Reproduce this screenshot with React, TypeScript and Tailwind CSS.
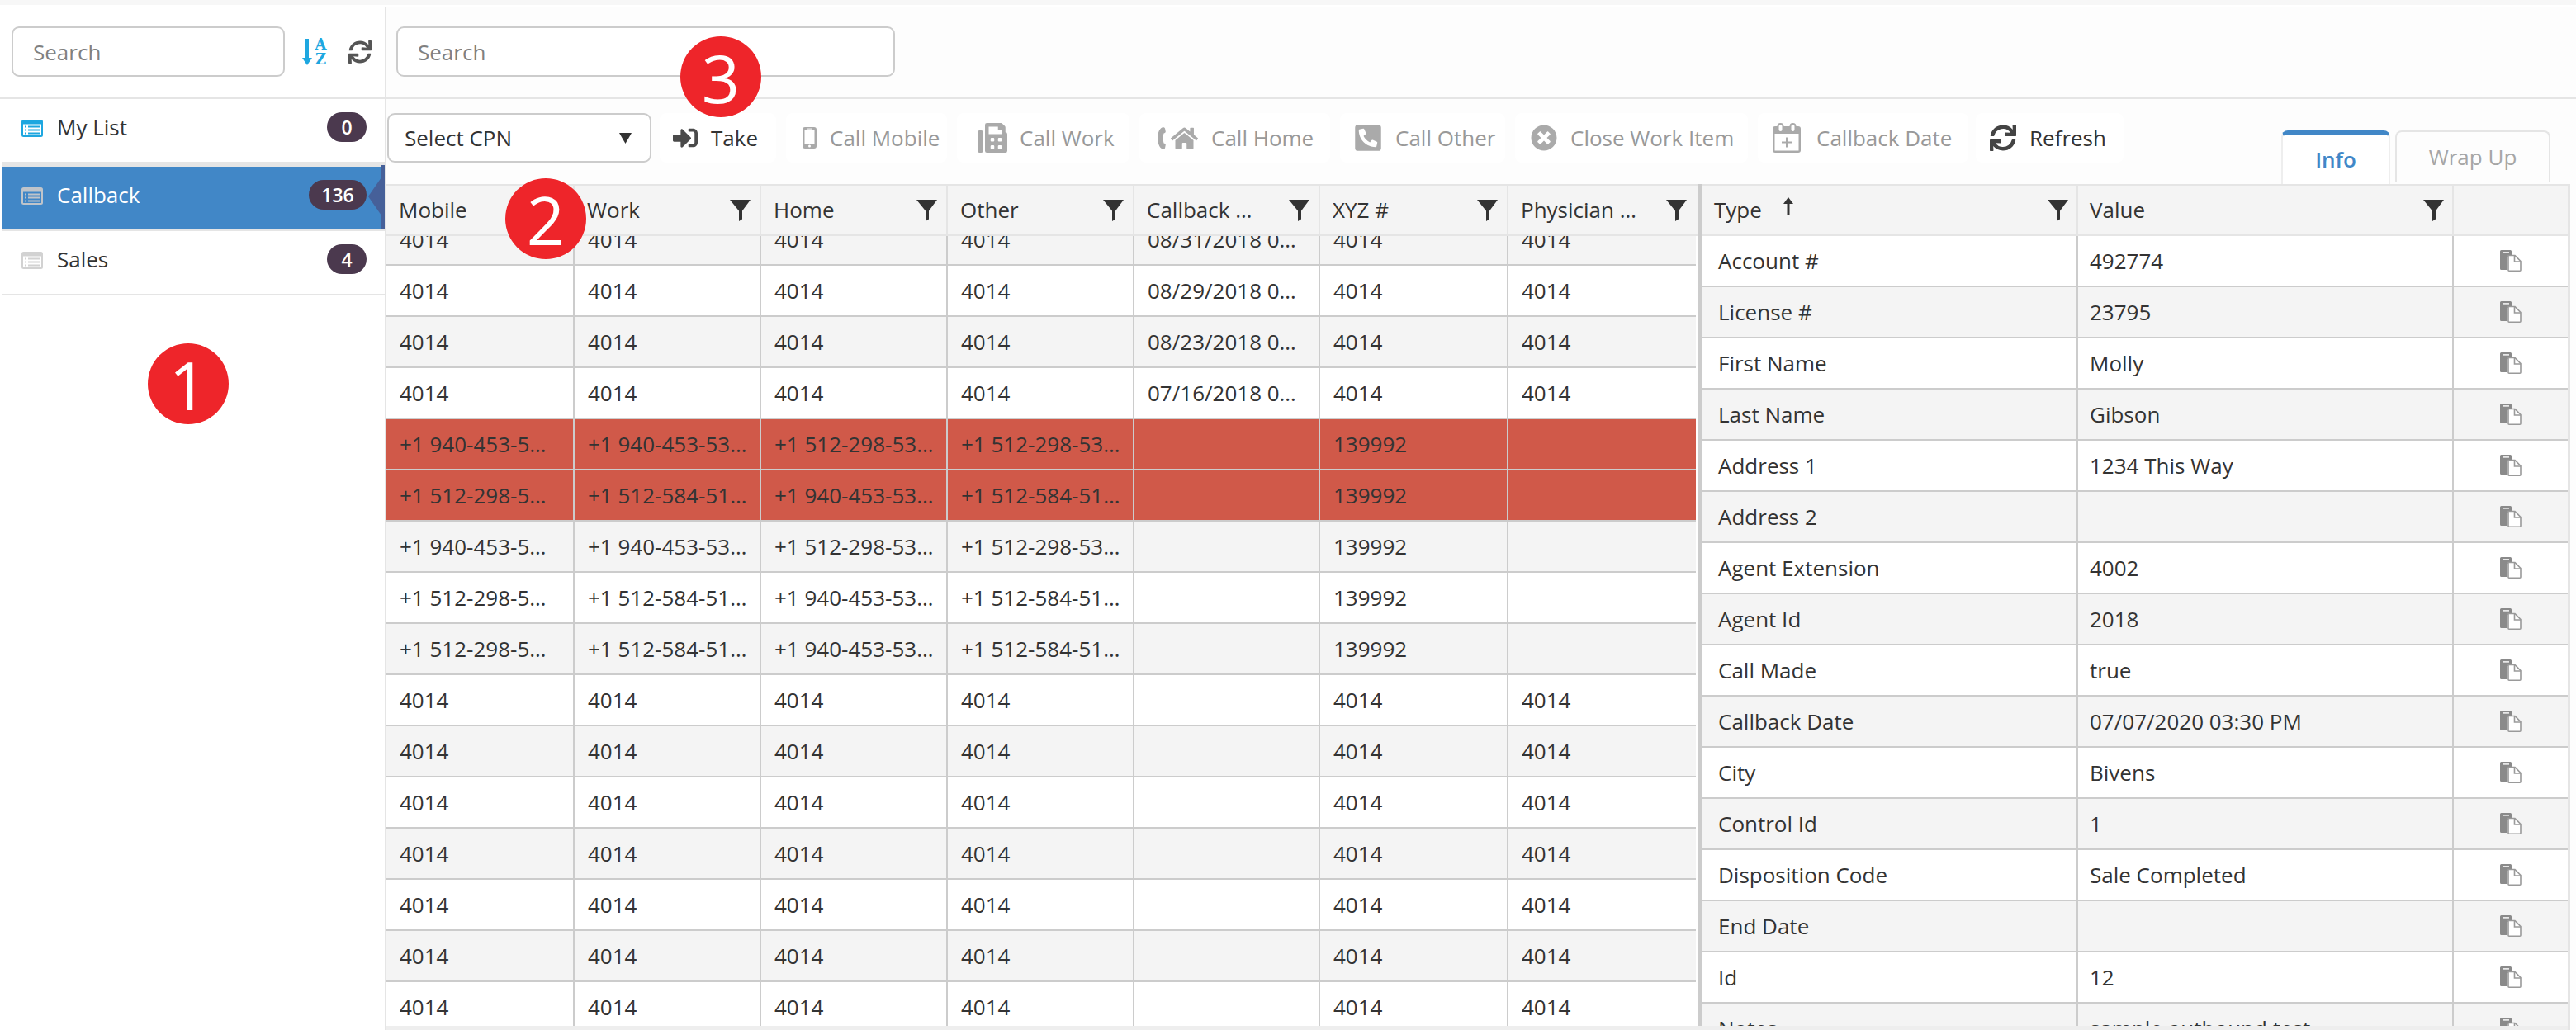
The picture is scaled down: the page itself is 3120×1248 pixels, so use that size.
import React from "react";
import { FaSignInAlt, FaFax, FaHome, FaPhoneSquareAlt, FaTimesCircle, FaSync } from "react-icons/fa";

function ListIcon({ frame, panel }: { frame: string; panel: string }) {
  return (
    <svg width="26" height="21" viewBox="0 0 26 21" className="shrink-0 mt-[3px]">
      <rect width="26" height="21" rx="2.5" fill={frame} />
      <rect x="2" y="5.5" width="22" height="13.5" fill={panel} />
      {[7.5, 11.5, 15.5].map((y) => (
        <g key={y} fill={frame}>
          <rect x="4" y={y} width="2" height="2" />
          <rect x="8" y={y} width="14" height="2" />
        </g>
      ))}
    </svg>
  );
}

function Funnel() {
  return (
    <svg width="25" height="26" viewBox="0 0 25 26" className="shrink-0">
      <path d="M0 0H25L15 13.5V23.5L11 26V13.5Z" fill="#333333" />
    </svg>
  );
}

function CopyIcon() {
  return (
    <svg width="26" height="26" viewBox="0 0 26 26">
      <path d="M1.5 0H12.5A1.5 1.5 0 0 1 14 1.5V8H9V24H1.5A1.5 1.5 0 0 1 0 22.500V1.500A1.500 1.500 0 0 1 1.500 0Z" fill="#8a8a8a" />
      <rect x="3" y="2.200" width="8" height="1.400" fill="#ffffff" />
      <path d="M10 6.500H18L25 13.500V24.200A1 1 0 0 1 24 25.200H11A1 1 0 0 1 10 24.200Z" fill="#ffffff" stroke="#9a9a9a" strokeWidth="1.600" />
      <path d="M17.500 6.500V14H25" fill="none" stroke="#9a9a9a" strokeWidth="1.600" />
    </svg>
  );
}

function MobileIcon() {
  return (
    <svg width="17" height="26" viewBox="0 0 17 26" className="shrink-0">
      <rect width="17" height="26" rx="3" fill="#aaaaaa" />
      <rect x="2.500" y="4" width="12" height="16.500" fill="#ffffff" />
      <circle cx="8.500" cy="23" r="1.500" fill="#ffffff" />
      <rect x="6" y="1.600" width="5" height="1" fill="#ffffff" />
    </svg>
  );
}

function HomePhoneIcon() {
  return (
    <span className="flex items-center gap-[6px] shrink-0">
      <svg width="10" height="27" viewBox="0 0 10 27">
        <path d="M5.500 0.500C6.800 0 8.500 0.300 9 1.500L9.800 5.500C9.800 6.700 8.800 7.200 7.500 7.600C6.600 10.500 6.500 16 7.500 19.500C8.800 19.800 9.800 20.400 9.800 21.500L9 25.500C8.500 26.700 6.800 27 5.500 26.500C-1.500 23 -1.800 4 5.500 0.500Z" fill="#aaaaaa" />
      </svg>
      <FaHome size={33} color="#aaaaaa" />
    </span>
  );
}

function CalendarIcon() {
  return (
    <svg width="34" height="36" viewBox="0 0 34 36" className="shrink-0">
      <rect y="4" width="34" height="32" rx="3" fill="#aaaaaa" />
      <rect x="2.500" y="13" width="29" height="20.500" fill="#ffffff" />
      <rect x="6.500" y="1" width="6" height="10" rx="3" fill="#ffffff" stroke="#aaaaaa" strokeWidth="2" />
      <rect x="21.500" y="1" width="6" height="10" rx="3" fill="#ffffff" stroke="#aaaaaa" strokeWidth="2" />
      <path d="M17 17.500V29.500M11 23.500H23" stroke="#aaaaaa" strokeWidth="2" />
    </svg>
  );
}

function Search({ width }: { width: string }) {
  return (
    <input
      readOnly
      placeholder="Search"
      className={`${width} h-[61px] shrink-0 rounded-[9px] border-2 border-[#cccccc] bg-white pl-[24px] text-[26px] text-[#333333] placeholder:text-[#808080] outline-none`}
    />
  );
}

function Badge({ n, width }: { n: string; width: string }) {
  return (
    <span className={`${width} h-[36px] rounded-full bg-[#4b394e] text-white text-[23px] font-semibold flex items-center justify-center`}>
      {n}
    </span>
  );
}

function Marker({ n, place }: { n: string; place: string }) {
  return (
    <div className={`absolute ${place} w-[98px] h-[98px] rounded-full bg-[#ee252a] text-white text-[81px] font-medium leading-none flex items-center justify-center`}>
      {n}
    </div>
  );
}

const colWidths = ["w-[228px]", "w-[226px]", "w-[226px]", "w-[226px]", "w-[225px]", "w-[228px]", "w-[227px]"];
const headers = ["Mobile", "Work", "Home", "Other", "Callback …", "XYZ #", "Physician …"];

const d4 = "4014";
const phoneA = ["+1 940-453-5…", "+1 940-453-53…", "+1 512-298-53…", "+1 512-298-53…", "", "139992", ""];
const phoneB = ["+1 512-298-5…", "+1 512-584-51…", "+1 940-453-53…", "+1 512-584-51…", "", "139992", ""];
const dated = (date: string) => [d4, d4, d4, d4, date, d4, d4];
const plain = [d4, d4, d4, d4, "", d4, d4];

const rows: string[][] = [
  dated("08/31/2018 0…"),
  dated("08/29/2018 0…"),
  dated("08/23/2018 0…"),
  dated("07/16/2018 0…"),
  phoneA,
  phoneB,
  phoneA,
  phoneB,
  phoneB,
  plain,
  plain,
  plain,
  plain,
  plain,
  plain,
  plain,
];

const info: [string, string][] = [
  ["Account #", "492774"],
  ["License #", "23795"],
  ["First Name", "Molly"],
  ["Last Name", "Gibson"],
  ["Address 1", "1234 This Way"],
  ["Address 2", ""],
  ["Agent Extension", "4002"],
  ["Agent Id", "2018"],
  ["Call Made", "true"],
  ["Callback Date", "07/07/2020 03:30 PM"],
  ["City", "Bivens"],
  ["Control Id", "1"],
  ["Disposition Code", "Sale Completed"],
  ["End Date", ""],
  ["Id", "12"],
  ["Notes", "sample outbound test"],
];

function ToolButton({
  box,
  gap,
  icon,
  label,
  dark,
}: {
  box: string;
  gap: string;
  icon: React.ReactNode;
  label: string;
  dark?: boolean;
}) {
  return (
    <div className={`${box} ${gap} h-[60px] shrink-0 rounded-[8px] bg-white flex items-center whitespace-nowrap ${dark ? "text-[#333333]" : "text-[#999999]"}`}>
      {icon}
      <span>{label}</span>
    </div>
  );
}

export default function App() {
  return (
    <div className="relative w-[3120px] h-[1248px] overflow-hidden bg-white font-['Open_Sans',sans-serif] text-[26px] text-[#333333] flex flex-col">
      <div className="h-[6px] shrink-0 bg-[#f7f7f7]" />
      <div className="h-[2px] shrink-0 bg-white" />
      <div className="flex flex-1 min-h-0">
        {/* Sidebar */}
        <aside className="w-[468px] shrink-0 border-r-2 border-[#e5e5e5] pl-[2px] flex flex-col">
          <div className="h-[112px] shrink-0 border-b-2 border-[#e5e5e5] pl-[14px] pt-[24px] flex items-start -ml-[2px]">
            <Search width="w-[331px]" />
            <div className="h-[61px] ml-[21px] flex items-center">
              <svg width="12" height="32" viewBox="0 0 12 32" className="shrink-0">
                <path d="M4 0H8V23H12L6 32L0 23H4Z" fill="#1ea7e0" />
              </svg>
              <span className="ml-[3px] w-[15px] font-['DejaVu_Serif',serif] font-bold text-[18px] leading-[18px] text-[#1ea7e0] text-center">
                A
                <br />Z
              </span>
              <FaSync size={28} color="#555555" className="ml-[26px]" />
            </div>
          </div>
          <div className="h-[76px] shrink-0 bg-white pl-[24px] pr-[22px] pb-[8px] flex items-center gap-[17px]">
            <ListIcon frame="#1ea7e0" panel="#ffffff" />
            <span className="flex-1">My List</span>
            <Badge n="0" width="w-[48px]" />
          </div>
          <div className="h-[6px] shrink-0 bg-[#e5e5e5]" />
          <div className="relative h-[76px] shrink-0 bg-[#4187c7] pl-[24px] pr-[22px] pb-[8px] flex items-center gap-[17px] text-white">
            <ListIcon frame="#bfc4ca" panel="#4187c7" />
            <span className="flex-1">Callback</span>
            <Badge n="136" width="w-[70px]" />
            <div className="absolute right-0 top-[-2px] w-[4px] h-[78px] bg-[#466099]" />
            <svg width="16" height="46" viewBox="0 0 16 46" className="absolute right-[4px] top-[13px]">
              <path d="M16 0V46L0 23Z" fill="#466099" />
            </svg>
          </div>
          <div className="h-[2px] shrink-0 bg-[#e5e5e5]" />
          <div className="h-[76px] shrink-0 bg-white pl-[24px] pr-[22px] pb-[8px] flex items-center gap-[17px]">
            <ListIcon frame="#d2d2d2" panel="#ffffff" />
            <span className="flex-1">Sales</span>
            <Badge n="4" width="w-[48px]" />
          </div>
          <div className="h-[2px] shrink-0 bg-[#e5e5e5]" />
        </aside>

        {/* Main */}
        <main className="flex-1 min-w-0 flex flex-col bg-[#fdfdfd]">
          <div className="h-[112px] shrink-0 border-b-2 border-[#e5e5e5] pl-[12px] pt-[24px]">
            <Search width="w-[604px]" />
          </div>

          {/* Toolbar */}
          <div className="h-[103px] shrink-0 pl-[1px] pr-[31px] flex">
            <div className="mt-[17px] h-[60px] w-[320px] shrink-0 rounded-[9px] border-2 border-[#cccccc] bg-white pl-[19px] pr-[22px] flex items-center justify-between">
              <span>Select CPN</span>
              <svg width="15" height="13" viewBox="0 0 15 13">
                <path d="M0 0H15L7.500 13Z" fill="#333333" />
              </svg>
            </div>
            <div className="mt-[17px] ml-[10px] flex gap-[12px]">
              <ToolButton box="w-[141px] pl-[16px]" gap="gap-[16px]" dark icon={<FaSignInAlt size={30} color="#4a4a4a" />} label="Take" />
              <ToolButton box="w-[195px] pl-[20px]" gap="gap-[16px]" icon={<MobileIcon />} label="Call Mobile" />
              <ToolButton box="w-[209px] pl-[25px]" gap="gap-[15px]" icon={<FaFax size={36} color="#aaaaaa" />} label="Call Work" />
              <ToolButton box="w-[231px] pl-[22px]" gap="gap-[16px]" icon={<HomePhoneIcon />} label="Call Home" />
              <ToolButton box="w-[200px] pl-[16px]" gap="gap-[15px]" icon={<FaPhoneSquareAlt size={36} color="#aaaaaa" />} label="Call Other" />
              <ToolButton box="w-[282px] pl-[19px]" gap="gap-[16px]" icon={<FaTimesCircle size={32} color="#aaaaaa" />} label="Close Work Item" />
              <ToolButton box="w-[255px] pl-[18px]" gap="gap-[19px]" icon={<CalendarIcon />} label="Callback Date" />
              <div className="-ml-[3px]">
                <ToolButton box="w-[179px] pl-[17px]" gap="gap-[16px]" dark icon={<FaSync size={32} color="#444444" />} label="Refresh" />
              </div>
            </div>
            <div className="ml-auto flex items-end gap-[6px]">
              <div className="w-[132px] h-[65px] rounded-t-[8px] border-t-[5px] border-x-2 border-[#4187c7] border-x-[#eeeeee] bg-white text-[#4187c7] font-semibold flex items-center justify-center">
                Info
              </div>
              <div className="w-[188px] h-[62px] mb-[3px] rounded-t-[8px] border-t-2 border-x-2 border-[#e5e5e5] text-[#a6a6a6] flex items-center justify-center">
                Wrap Up
              </div>
            </div>
          </div>

          {/* Tables */}
          <div className="flex-1 min-h-0 flex pr-[7px]">
            <div className="flex-1 min-w-0 flex flex-col border-b-[5px] border-[#eeeeee]">
              <div className="flex-1 min-h-0 flex">
                {/* Left table */}
                <section className="w-[1589px] shrink-0 flex flex-col bg-white overflow-hidden">
                  <div className="h-[63px] shrink-0 flex bg-[#f4f4f4] border-y-2 border-[#e5e5e5]">
                    {headers.map((h, i) => (
                      <div
                        key={h}
                        className={`${colWidths[i]} shrink-0 pl-[15px] pr-[11px] flex items-center justify-between ${i < 6 ? "border-r-2 border-[#e5e5e5]" : ""}`}
                      >
                        <span className="truncate">{h}</span>
                        <Funnel />
                      </div>
                    ))}
                  </div>
                  <div className="flex-1 min-h-0 overflow-hidden">
                    <div className="-mt-[26px] w-[1586px]">
                      {rows.map((r, ri) => {
                        const red = ri === 4 || ri === 5;
                        const bg = red ? "bg-[#d05949]" : ri % 2 === 0 ? "bg-[#f4f4f4]" : "bg-white";
                        return (
                          <div key={ri} className={`h-[62px] flex border-b-2 border-[#cccccc] ${bg}`}>
                            {r.map((c, ci) => (
                              <div
                                key={ci}
                                className={`${colWidths[ci]} shrink-0 pl-[16px] flex items-center whitespace-nowrap overflow-hidden ${ci < 6 ? "border-r-2 border-[#cccccc]" : ""}`}
                              >
                                {c}
                              </div>
                            ))}
                          </div>
                        );
                      })}
                    </div>
                  </div>
                </section>
                <div className="w-[5px] shrink-0 bg-[#cccccc]" />
                {/* Right table */}
                <section className="flex-1 min-w-0 flex flex-col bg-white overflow-hidden">
                  <div className="h-[63px] shrink-0 flex bg-[#f4f4f4] border-y-2 border-[#e5e5e5]">
                    <div className="w-[455px] shrink-0 pl-[14px] pr-[10px] border-r-2 border-[#e5e5e5] flex items-center">
                      <span>Type</span>
                      <svg width="14" height="21" viewBox="0 0 14 21" className="ml-[25px] -mt-[10px]">
                        <path d="M7 0L13 8H8.500V21H5.500V8H1Z" fill="#333333" />
                      </svg>
                      <span className="ml-auto">
                        <Funnel />
                      </span>
                    </div>
                    <div className="w-[455px] shrink-0 pl-[14px] pr-[10px] border-r-2 border-[#e5e5e5] flex items-center justify-between">
                      <span>Value</span>
                      <Funnel />
                    </div>
                    <div className="flex-1" />
                  </div>
                  <div className="flex-1 min-h-0 overflow-hidden">
                    {info.map(([k, v], i) => (
                      <div key={k} className={`h-[62px] flex border-b-2 border-[#cccccc] ${i % 2 === 0 ? "bg-white" : "bg-[#f4f4f4]"}`}>
                        <div className="w-[455px] shrink-0 pl-[19px] border-r-2 border-[#cccccc] flex items-center">{k}</div>
                        <div className="w-[455px] shrink-0 pl-[14px] border-r-2 border-[#cccccc] flex items-center">{v}</div>
                        <div className="flex-1 flex items-center justify-center">
                          <CopyIcon />
                        </div>
                      </div>
                    ))}
                  </div>
                </section>
              </div>
            </div>
            <div className="w-[3px] shrink-0 bg-[#e5e5e5]" />
          </div>
        </main>
      </div>

      <Marker n="1" place="left-[179px] top-[416px]" />
      <Marker n="2" place="left-[612px] top-[216px]" />
      <Marker n="3" place="left-[824px] top-[44px]" />
    </div>
  );
}
